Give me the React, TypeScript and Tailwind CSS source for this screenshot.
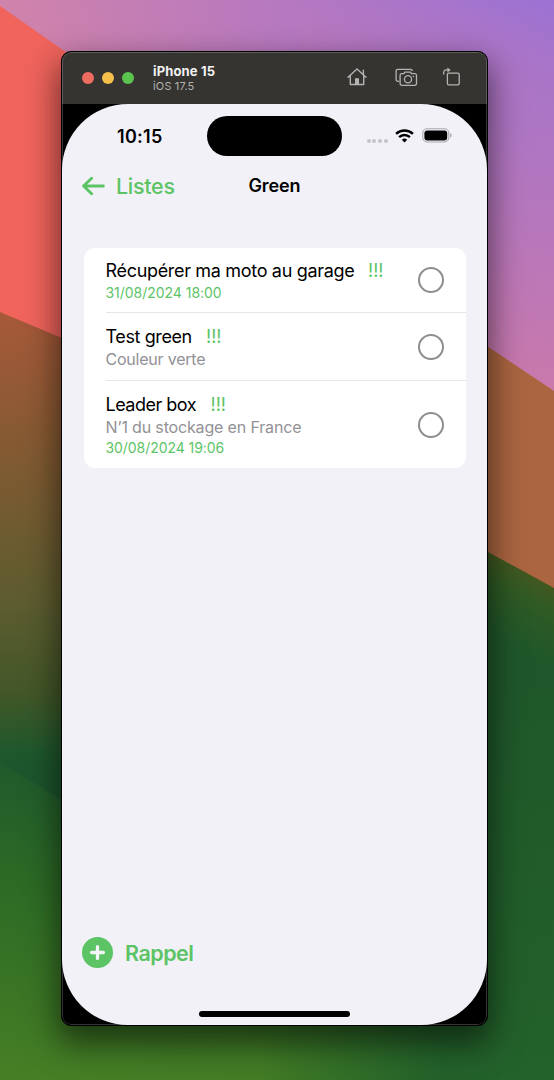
import React from "react";

type Reminder = {
  title: string;
  titleClass: string;
  note?: string;
  noteClass?: string;
  date?: string;
  dateClass?: string;
  rowClass: string;
  bodyClass: string;
};

const reminders: Reminder[] = [
  {
    title: "Récupérer ma moto au garage",
    titleClass: "w-[249px] tracking-[-0.32px]",
    date: "31/08/2024 18:00",
    dateClass: "tracking-[-0.03px] pt-px",
    rowClass: "h-[65px]",
    bodyClass: "pt-[12.5px]",
  },
  {
    title: "Test green",
    titleClass: "w-[87px] tracking-[-0.4px]",
    note: "Couleur verte",
    noteClass: "tracking-[-0.22px]",
    rowClass: "h-[68px]",
    bodyClass: "pt-[13px]",
  },
  {
    title: "Leader box",
    titleClass: "w-[91.5px] tracking-[-0.5px]",
    note: "N’1 du stockage en France",
    noteClass: "tracking-[-0.16px]",
    date: "30/08/2024 19:06",
    dateClass: "tracking-[-0.06px]",
    rowClass: "h-[87.5px]",
    bodyClass: "pt-[13px]",
  },
];

function Wallpaper() {
  return (
    <svg className="absolute inset-0 h-full w-full" viewBox="0 0 554 1080" preserveAspectRatio="none" aria-hidden="true">
      <defs>
        <linearGradient id="sky" gradientUnits="userSpaceOnUse" x1="40" y1="120" x2="540" y2="-40">
          <stop offset="0" stopColor="#d083aa" />
          <stop offset="0.5" stopColor="#b678c0" />
          <stop offset="1" stopColor="#9b72d4" />
        </linearGradient>
        <linearGradient id="skyRight" x1="0" y1="0" x2="0" y2="1">
          <stop offset="0" stopColor="#c879ac" stopOpacity="0" />
          <stop offset="0.3" stopColor="#b577bd" stopOpacity="0.6" />
          <stop offset="1" stopColor="#cb79a9" />
        </linearGradient>
        <linearGradient id="earth" gradientUnits="userSpaceOnUse" x1="0" y1="312" x2="0" y2="770">
          <stop offset="0" stopColor="#a75939" />
          <stop offset="0.3" stopColor="#835a32" />
          <stop offset="0.65" stopColor="#5b5c2f" />
          <stop offset="0.83" stopColor="#435728" />
          <stop offset="0.96" stopColor="#1f582c" />
          <stop offset="1" stopColor="#1d552d" />
        </linearGradient>
        <linearGradient id="meadow" gradientUnits="userSpaceOnUse" x1="30" y1="768" x2="0" y2="1080">
          <stop offset="0" stopColor="#205a2c" />
          <stop offset="0.35" stopColor="#2c6a25" />
          <stop offset="1" stopColor="#467f25" />
        </linearGradient>
        <linearGradient id="forest" gradientUnits="userSpaceOnUse" x1="554" y1="585" x2="520" y2="650">
          <stop offset="0" stopColor="#43581f" />
          <stop offset="0.35" stopColor="#2f5a24" />
          <stop offset="1" stopColor="#1f572a" />
        </linearGradient>
        <linearGradient id="forestFloor" x1="0" y1="0" x2="0" y2="1">
          <stop offset="0" stopColor="#23622a" stopOpacity="0" />
          <stop offset="1" stopColor="#23622a" />
        </linearGradient>
        <linearGradient id="fade" x1="0" y1="0" x2="1" y2="0">
          <stop offset="0.4" stopColor="#23612a" stopOpacity="0" />
          <stop offset="0.85" stopColor="#23612a" />
        </linearGradient>
      </defs>
      <rect width="554" height="1080" fill="url(#sky)" />
      <rect x="300" y="0" width="254" height="400" fill="url(#skyRight)" />
      <path d="M0 6 L100 76 V360 H0 Z" fill="#f0645c" />
      <path d="M0 312 L300 438 V900 H0 Z" fill="url(#earth)" />
      <path d="M280 208 L554 391 V600 H280 Z" fill="#ab6540" />
      <path d="M280 438 L554 588 V1080 H280 Z" fill="url(#forest)" />
      <rect x="280" y="680" width="274" height="400" fill="url(#forestFloor)" />
      <path d="M0 762 L100 824 L450 1000 V1080 H0 Z" fill="url(#meadow)" />
      <rect x="100" y="1000" width="400" height="80" fill="url(#fade)" />
    </svg>
  );
}

function HomeIcon() {
  return (
    <svg className="h-[20px] w-[20px]" viewBox="0 0 20 20" fill="none" stroke="#b4b3b1" strokeWidth="1.4" strokeLinecap="round" strokeLinejoin="round">
      <path d="M1 10.2 10 1.9l9 8.3M3.3 8.4v9.1h13.4V8.4M16.4 7.4V3.1" />
      <path d="M8 17.4v-6.2h4v6.2z" fill="#b4b3b1" stroke="none" />
    </svg>
  );
}

function CameraIcon() {
  return (
    <svg className="h-[19px] w-[23px]" viewBox="0 0 23 19" fill="none" stroke="#b4b3b1" strokeWidth="1.3" strokeLinejoin="round">
      <path d="M4.2 13.3H2.8A1.7 1.7 0 0 1 1.1 11.6V3A1.7 1.7 0 0 1 2.8 1.3h12.8A1.7 1.7 0 0 1 17.3 3" />
      <path d="M6.8 5.6h2.1l1-1.5h5.6l1 1.5h3.3A1.7 1.7 0 0 1 21.5 7.3v8.3a1.7 1.7 0 0 1-1.7 1.7h-13a1.7 1.7 0 0 1-1.7-1.7V7.3A1.7 1.7 0 0 1 6.8 5.6z" />
      <circle cx="13" cy="11.2" r="3.6" />
      <circle cx="18.4" cy="8.5" r="0.8" fill="#b4b3b1" stroke="none" />
    </svg>
  );
}

function RotateIcon() {
  return (
    <svg className="h-[20px] w-[18px]" viewBox="0 0 18 20" fill="none" stroke="#b4b3b1" strokeWidth="1.3" strokeLinejoin="round">
      <rect x="4.4" y="6.2" width="11.8" height="11.6" rx="1.4" />
      <path d="M.7 7.6V5.4A2.5 2.5 0 0 1 3.2 2.9H5.4" />
      <path d="M4.4 .4 7.8 2.9 4.4 5.4z" fill="#b4b3b1" stroke="none" />
    </svg>
  );
}

function WifiIcon() {
  return (
    <svg className="h-[14px] w-[19px]" viewBox="0 0 19 14" fill="none" stroke="#000" strokeWidth="2.4">
      <path d="M1.1 4.9a12 12 0 0 1 16.8 0" />
      <path d="M4.1 8.2a7.6 7.6 0 0 1 10.8 0" />
      <path d="M9.5 13.6 6.8 10.8a3.9 3.9 0 0 1 5.4 0z" fill="#000" stroke="none" />
    </svg>
  );
}

function BatteryIcon() {
  return (
    <svg className="h-[15px] w-[31px]" viewBox="0 0 31 15">
      <rect x="0.8" y="0.8" width="26" height="13.2" rx="4.4" fill="none" stroke="#a9a8ac" strokeWidth="1.1" />
      <rect x="2.4" y="2.4" width="22.8" height="10" rx="2.9" fill="#000" />
      <path d="M28.2 5.1c1.9.7 1.9 3.9 0 4.6z" fill="#a9a8ac" />
    </svg>
  );
}

function ReminderRow({ item, last }: { item: Reminder; last: boolean }) {
  return (
    <li className={`flex ${item.rowClass}`}>
      <div className={`flex min-w-0 flex-1 justify-between pr-[21.5px] ${last ? "" : "border-b border-[#e6e6e8]"}`}>
        <div className={`whitespace-nowrap ${item.bodyClass}`}>
          <div className="flex h-[22px] items-center text-[18px] leading-[22px] text-black">
            <span className={item.titleClass}>{item.title}</span>
            <span className="ml-[13.5px] tracking-[0px] text-[#5dc466]">!!!</span>
          </div>
          {item.note && (
            <p className={`h-[22.5px] text-[16px] leading-[23px] text-[#929195] ${item.noteClass ?? ""}`}>{item.note}</p>
          )}
          {item.date && (
            <p className={`h-[20px] text-[14px] leading-[20px] text-[#5dc466] ${item.dateClass ?? ""}`}>{item.date}</p>
          )}
        </div>
        <button aria-label={item.title} className="mt-px size-[26px] self-center rounded-full border-2 border-[#8e8d92]" />
      </div>
    </li>
  );
}

export default function App() {
  return (
    <div className="relative h-[1080px] w-[554px] overflow-hidden font-['Inter','Noto_Sans',sans-serif]">
      <Wallpaper />
      <div className="relative flex h-full flex-col pt-[51px] pl-[61px]">
        <div className="relative flex h-[975px] w-[427px] flex-col overflow-hidden rounded-[10px] border border-black bg-black shadow-[0_14px_32px_3px_rgba(0,0,0,0.55)]">
          <header className="flex h-[52px] shrink-0 items-center bg-[#353431] pr-[26px] pl-[20px]">
            <div className="flex gap-[8px]">
              <span className="size-[12px] rounded-full bg-[#ed6b5f]" />
              <span className="size-[12px] rounded-full bg-[#f4bf4b]" />
              <span className="size-[12px] rounded-full bg-[#5ac44e]" />
            </div>
            <div className="ml-[19px] flex-1 pt-px">
              <h1 className="text-[13px] leading-[15px] font-bold tracking-[0.15px] text-[#f3f2f1]">iPhone 15</h1>
              <p className="text-[11px] leading-[14px] tracking-[0.15px] text-[#b4b3b1]">iOS 17.5</p>
            </div>
            <div className="flex items-center pb-[2px]">
              <HomeIcon />
              <span className="w-[28px]" />
              <CameraIcon />
              <span className="w-[25px]" />
              <RotateIcon />
            </div>
          </header>

          <main className="flex min-h-0 flex-1 flex-col rounded-[66px] bg-[#f2f1f7]">
            <div className="flex h-[64px] shrink-0 items-center pl-[55px]">
              <span className="w-[90px] pt-px text-[18px] leading-[22px] font-semibold tracking-[0.3px]">10:15</span>
              <span className="h-[40px] w-[135px] rounded-full bg-black" />
              <div className="ml-[24.5px] flex items-center pb-px">
                <span className="mt-[10px] mr-[7px] flex gap-[1.8px]">
                  <span className="size-[4px] rounded-full bg-[#c4c3c9]" />
                  <span className="size-[4px] rounded-full bg-[#c4c3c9]" />
                  <span className="size-[4px] rounded-full bg-[#c4c3c9]" />
                  <span className="size-[4px] rounded-full bg-[#c4c3c9]" />
                </span>
                <WifiIcon />
                <span className="w-[8px]" />
                <BatteryIcon />
              </div>
            </div>

            <nav className="grid h-[36px] shrink-0 grid-cols-3 items-center pr-[20px] pl-[20px]">
              <div className="flex items-center text-[#5dc466]">
                <svg className="h-[20px] w-[23px]" viewBox="0 0 23 20" fill="none" stroke="currentColor" strokeWidth="2.9" strokeLinecap="round" strokeLinejoin="round">
                  <path d="M21.4 10H1.6M9.6 2.2 1.6 10l8 7.8" />
                </svg>
                <span className="ml-[11px] text-[21.5px] leading-[28px] font-[550] tracking-[-0.3px]">Listes</span>
              </div>
              <h2 className="text-center text-[18px] leading-[22px] font-semibold tracking-[-0.1px]">Green</h2>
            </nav>

            <ul className="mt-[43.5px] mr-[21.5px] ml-[21.5px] rounded-[11px] bg-white pl-[22px]">
              {reminders.map((r, i) => (
                <ReminderRow key={r.title} item={r} last={i === reminders.length - 1} />
              ))}
            </ul>

            <footer className="mt-auto flex flex-col pb-[8.5px]">
              <div className="mb-[43px] flex items-center pl-[20px] text-[#5dc466]">
                <svg className="size-[31px]" viewBox="0 0 31 31">
                  <circle cx="15.5" cy="15.5" r="15.5" fill="currentColor" />
                  <path d="M15.5 9.6v11.8M9.6 15.5h11.8" stroke="#f5f5f9" strokeWidth="3.3" strokeLinecap="round" />
                </svg>
                <span className="ml-[12px] text-[21.5px] leading-[28px] font-semibold tracking-[-0.5px]">Rappel</span>
              </div>
              <span className="h-[5.5px] w-[151px] self-center rounded-full bg-black" />
            </footer>
          </main>
          <span className="pointer-events-none absolute inset-0 rounded-[9px] border border-white/20 [mask-image:linear-gradient(#000,#000)]" />
        </div>
      </div>
    </div>
  );
}
